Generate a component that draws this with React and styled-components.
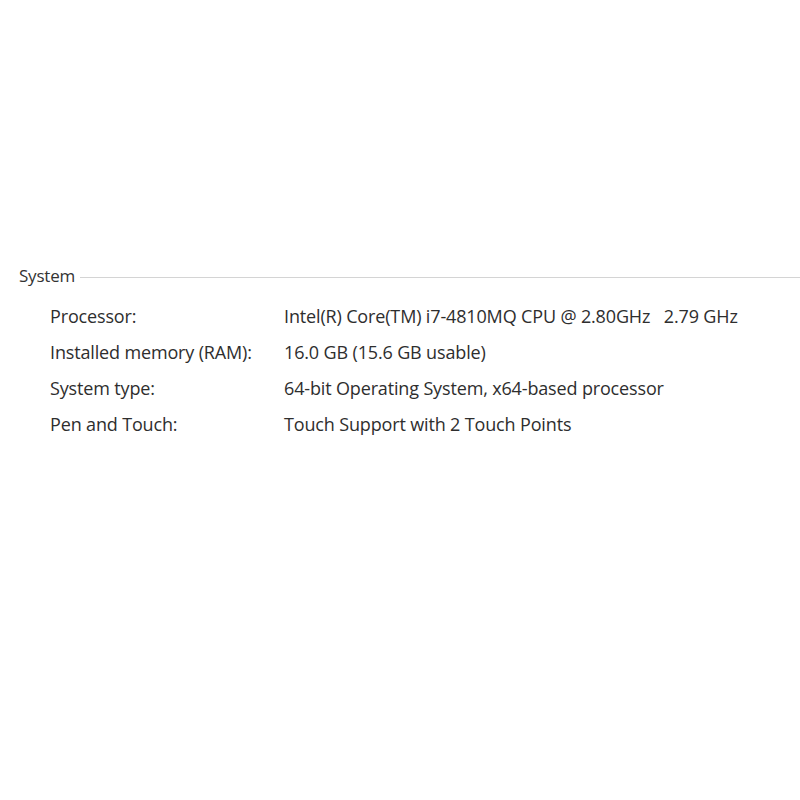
import styled, { createGlobalStyle } from "styled-components";

const GlobalStyle = createGlobalStyle`
    html, body {
        margin: 0;
        padding: 0;
        background: #ffffff;
    }
    body {
        font-family: "Open Sans", "Noto Sans", "Liberation Sans", sans-serif;
        color: #2b2b2b;
    }
`;

const Page = styled.div`
    width: 800px;
    height: 800px;
    padding-top: 262px;
    box-sizing: border-box;
    overflow: hidden;
`;

const GroupHeader = styled.div`
    display: flex;
    align-items: center;
    padding-left: 19px;
    gap: 5px;
    height: 26px;
`;

const GroupTitle = styled.span`
    font-size: 17px;
    letter-spacing: -0.2px;
    color: #333333;
`;

const Rule = styled.div`
    flex: 1;
    height: 1px;
    background: #d4d4d4;
    margin-top: 4px;
`;

const List = styled.div`
    display: flex;
    flex-direction: column;
    padding-top: 10px;
    padding-left: 50px;
`;

const Row = styled.div`
    display: grid;
    grid-template-columns: 234px 1fr;
    height: 36px;
    align-items: center;
    font-size: 18px;
    letter-spacing: -0.15px;
    color: #2e2e2e;
`;

const Label = styled.span``;

const Value = styled.span`
    white-space: pre;
`;

const rows = [
    ["Processor:", "Intel(R) Core(TM) i7-4810MQ CPU @ 2.80GHz   2.79 GHz"],
    ["Installed memory (RAM):", "16.0 GB (15.6 GB usable)"],
    ["System type:", "64-bit Operating System, x64-based processor"],
    ["Pen and Touch:", "Touch Support with 2 Touch Points"],
];

const App = () => {
    return (
        <Page>
            <GlobalStyle />
            <GroupHeader>
                <GroupTitle>System</GroupTitle>
                <Rule />
            </GroupHeader>
            <List>
                {rows.map(([label, value]) => (
                    <Row key={label}>
                        <Label>{label}</Label>
                        <Value>{value}</Value>
                    </Row>
                ))}
            </List>
        </Page>
    );
};

export default App;
